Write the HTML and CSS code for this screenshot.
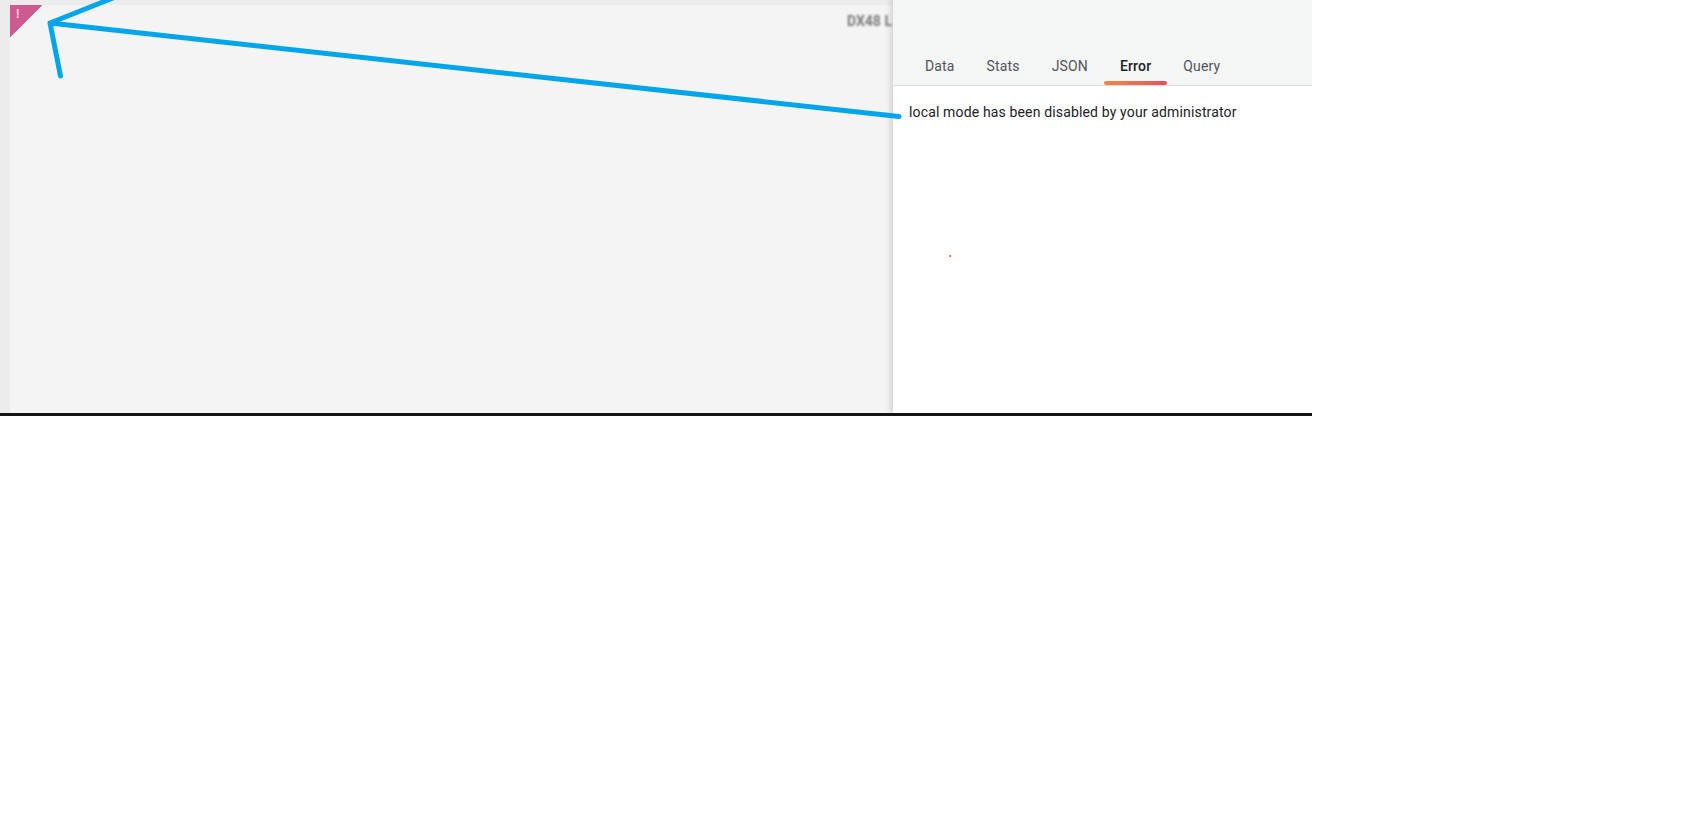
FILE: index.html
```html
<!DOCTYPE html>
<html lang="en">
<head>
    <meta charset="UTF-8">
    <meta name="viewport" content="width=device-width, initial-scale=1.0">
    <title>Panel inspector - Error</title>
    <link rel="stylesheet" href="styles.css">
</head>
<body>
    <div class="frame">
        <!-- Dashboard behind the drawer -->
        <div class="dashboard">
            <div class="panel">
                <div class="panel-corner"><span class="corner-mark">!</span></div>
                <div class="panel-title">DX48 L</div>
            </div>
        </div>

        <!-- Inspector drawer -->
        <div class="drawer">
            <div class="drawer-head">
                <div class="tabs">
                    <a class="tab">Data</a>
                    <a class="tab">Stats</a>
                    <a class="tab">JSON</a>
                    <a class="tab active">Error</a>
                    <a class="tab">Query</a>
                </div>
            </div>
            <div class="drawer-body">local mode has been disabled by your administrator</div>
        </div>

        <!-- Annotation drawn over the screenshot -->
        <svg class="arrow" width="1312" height="413" viewBox="0 0 1312 413">
            <path d="M899 116.500 L50 23 M50 23 L60.500 76 M50 23 L113 -2" fill="none" stroke="#00a5ea" stroke-width="5" stroke-linecap="round" stroke-linejoin="round"/>
        </svg>
        <span class="speck"></span>
    </div>
</body>
</html>
```

FILE: styles.css
```css
body {
    margin: 0;
    background: #ffffff;
    font-family: Roboto, "Liberation Sans", sans-serif;
}

.frame {
    position: relative;
    display: flex;
    width: 1312px;
    height: 413px;
    border-bottom: 3px solid #141414;
    overflow: hidden;
}

.dashboard {
    flex: 1;
    min-width: 0;
    padding: 5px 0 0 10px;
    background: #ececec;
}

.panel {
    display: flex;
    justify-content: flex-end;
    position: relative;
    height: 100%;
    background: #f4f4f4;
    overflow: hidden;
}

.panel-corner {
    position: absolute;
    top: 0;
    left: 0;
    width: 32px;
    height: 32px;
    background: linear-gradient(135deg, #cf5a90 0%, #cf5a90 50%, transparent 50%);
    filter: blur(0.6px);
}

.corner-mark {
    display: block;
    padding: 3px 0 0 6px;
    color: #f3d9e5;
    font-size: 12px;
    font-weight: 700;
    line-height: 12px;
}

.panel-title {
    width: 46px;
    margin-top: 9px;
    color: #7b7b7b;
    font-size: 14px;
    font-weight: 700;
    line-height: 14px;
    white-space: nowrap;
    filter: blur(0.8px);
}

.drawer {
    width: 419px;
    flex-shrink: 0;
    position: relative;
    background: #ffffff;
    box-shadow: -2px 0 6px rgba(0, 0, 0, 0.16);
}

.drawer-head {
    display: flex;
    align-items: flex-end;
    height: 85px;
    padding: 0 0 0 16px;
    background: #f4f5f5;
    border-bottom: 1px solid #dcdddd;
}

.tabs {
    display: flex;
}

.tab {
    position: relative;
    padding: 0 16px 9px;
    color: #52545a;
    font-size: 14px;
    line-height: 20px;
    letter-spacing: 0.15px;
}

.tab.active {
    color: #202226;
    font-weight: 500;
}

.tab.active::after {
    content: "";
    position: absolute;
    left: 0;
    right: 0;
    bottom: 0;
    height: 4px;
    border-radius: 2px;
    background: linear-gradient(90deg, #f0874a, #e8505b);
}

.drawer-body {
    padding: 16px 0 0 16px;
    color: #202226;
    font-size: 14px;
    line-height: 20px;
    letter-spacing: 0.15px;
}

.arrow {
    position: absolute;
    top: 0;
    left: 0;
}

.speck {
    position: absolute;
    top: 255px;
    left: 949px;
    width: 2px;
    height: 2px;
    background: #f47a3c;
}
```
